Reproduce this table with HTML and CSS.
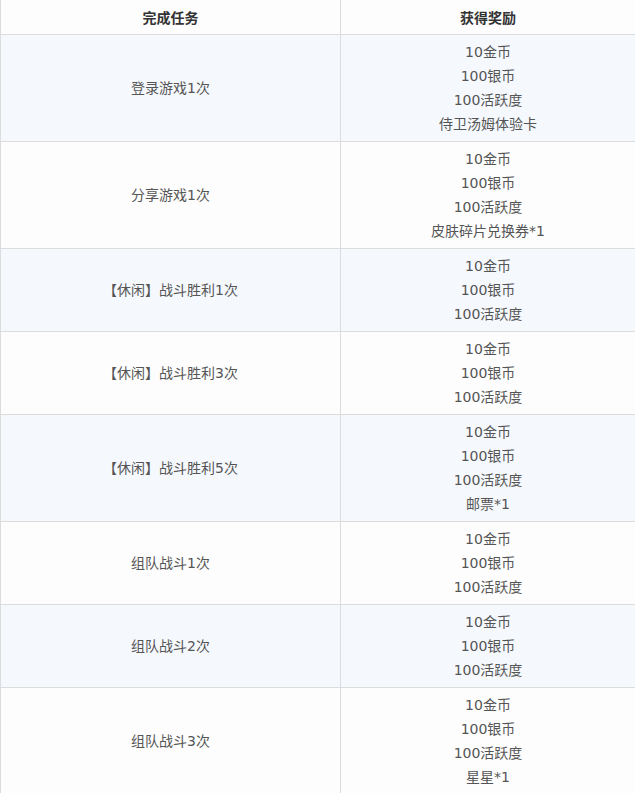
FILE: index.html
```html
<!DOCTYPE html>
<html lang="zh">
<head>
<meta charset="utf-8">
<link rel="stylesheet" href="styles.css">
</head>
<body>
<table class="tasks">
  <thead>
    <tr><th class="c1">完成任务</th><th class="c2">获得奖励</th></tr>
  </thead>
  <tbody>
    <tr class="odd"><td>登录游戏1次</td><td>10金币<br>100银币<br>100活跃度<br>侍卫汤姆体验卡</td></tr>
    <tr class="even"><td>分享游戏1次</td><td>10金币<br>100银币<br>100活跃度<br>皮肤碎片兑换券*1</td></tr>
    <tr class="odd"><td>【休闲】战斗胜利1次</td><td>10金币<br>100银币<br>100活跃度</td></tr>
    <tr class="even"><td>【休闲】战斗胜利3次</td><td>10金币<br>100银币<br>100活跃度</td></tr>
    <tr class="odd"><td>【休闲】战斗胜利5次</td><td>10金币<br>100银币<br>100活跃度<br>邮票*1</td></tr>
    <tr class="even"><td>组队战斗1次</td><td>10金币<br>100银币<br>100活跃度</td></tr>
    <tr class="odd"><td>组队战斗2次</td><td>10金币<br>100银币<br>100活跃度</td></tr>
    <tr class="even"><td>组队战斗3次</td><td>10金币<br>100银币<br>100活跃度<br>星星*1</td></tr>
  </tbody>
</table>
</body>
</html>
```
FILE: styles.css
```css
html, body {
  margin: 0;
  padding: 0;
  background: #fdfdfd;
}
.tasks {
  width: 635px;
  border-collapse: collapse;
  table-layout: fixed;
  font-family: "DejaVu Sans", "Noto Sans CJK SC", sans-serif;
  font-size: 14px;
  line-height: 24px;
  color: #555;
  border-left: 1px solid #dcdcdc;
}
.tasks th {
  height: 34px;
  padding: 0;
  font-family: "Noto Sans CJK SC", sans-serif;
  font-weight: bold;
  color: #333;
  background: #fdfdfd;
  border-bottom: 1px solid #dcdcdc;
  text-align: center;
}
.tasks .c1 { width: 339px; border-right: 1px solid #dcdcdc; }
.tasks td {
  padding: 5px 0;
  text-align: center;
  vertical-align: middle;
  border-bottom: 1px solid #dcdcdc;
}
.tasks td:first-child { border-right: 1px solid #dcdcdc; }
.tasks .odd td { background: #f5f9fe; }
.tasks .even td { background: #fdfdfd; }
```
